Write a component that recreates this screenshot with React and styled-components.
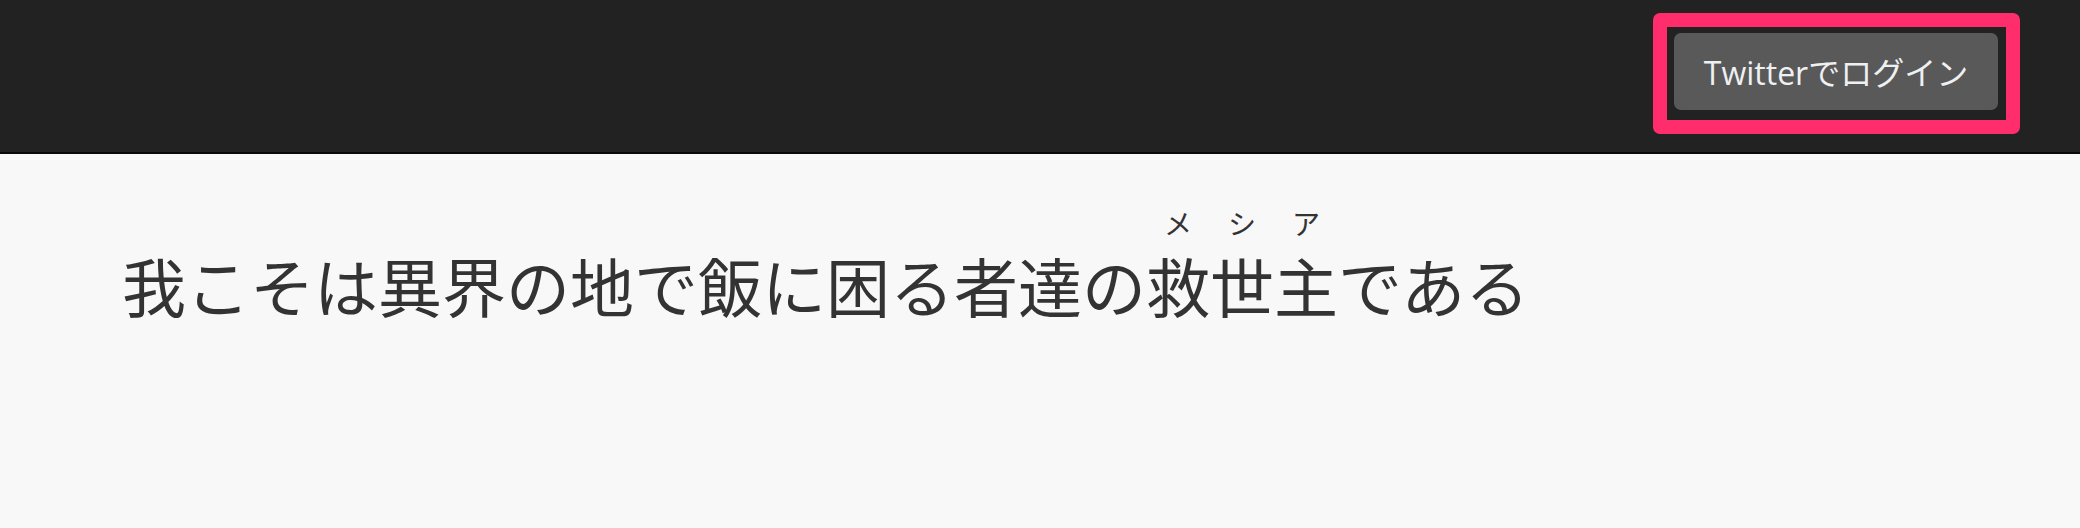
import styled, { createGlobalStyle } from "styled-components";

const GlobalStyle = createGlobalStyle`
  html, body {
    margin: 0;
    padding: 0;
    background-color: #f8f8f8;
  }
  body {
    font-family: "Open Sans", "Noto Sans CJK JP", sans-serif;
    color: #333;
  }
`;

const Header = styled.header`
  height: 152px;
  background-color: #222;
  border-bottom: 2px solid #0a0a0a;
  display: flex;
  align-items: center;
  justify-content: flex-end;
  padding-right: 60px;
`;

const Highlight = styled.div`
  border: 14px solid #ff2d6b;
  border-radius: 7px;
  padding: 6px 8px 10px 7px;
  margin-top: -6px;
`;

const LoginButton = styled.button`
  display: block;
  width: 324px;
  height: 77px;
  border: none;
  border-radius: 7px;
  background-color: #595959;
  color: #eef0f2;
  font-family: "Open Sans", "Noto Sans CJK JP", sans-serif;
  font-size: 32px;
  cursor: pointer;
`;

const Main = styled.main`
  padding: 72px 0 0 122px;
`;

const Title = styled.h1`
  margin: 0;
  font-family: "Noto Sans CJK JP", sans-serif;
  font-weight: 400;
  font-size: 64px;
  line-height: 1.2;
  color: #333;

  rt {
    font-size: 28px;
    position: relative;
    top: -16px;
  }
`;

const App = () => {
  return (
    <>
      <GlobalStyle />
      <Header>
        <Highlight>
          <LoginButton>Twitterでログイン</LoginButton>
        </Highlight>
      </Header>
      <Main>
        <Title>
          我こそは異界の地で飯に困る者達の
          <ruby>
            救世主<rt>メシア</rt>
          </ruby>
          である
        </Title>
      </Main>
    </>
  );
};

export default App;
